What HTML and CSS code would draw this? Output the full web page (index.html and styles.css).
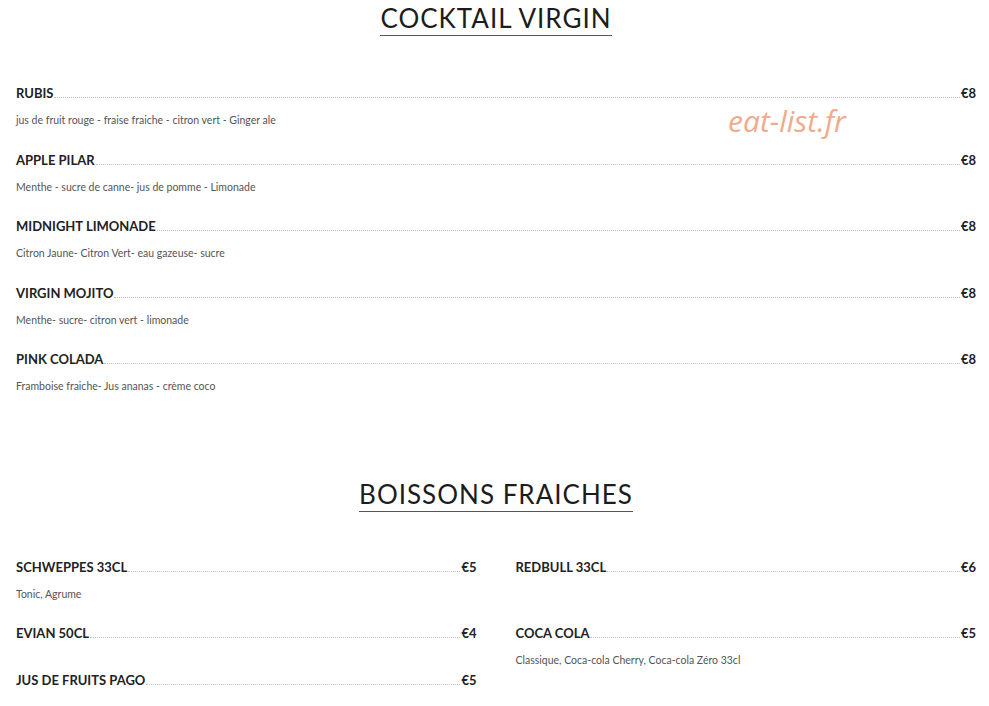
FILE: index.html
```html
<!DOCTYPE html>
<html lang="fr">
<head>
  <meta charset="UTF-8" />
  <meta name="viewport" content="width=device-width, initial-scale=1.0"/>
  <title>Carte - Boissons</title>
  <link rel="stylesheet" href="styles.css">
</head>
<body>

<div class="menu">

  <section class="section">
    <div class="section-head"><h2>COCKTAIL VIRGIN</h2></div>
    <div class="items">
      <div class="item">
        <div class="item-row"><span class="name">RUBIS</span><span class="dots"></span><span class="price">€8</span></div>
        <p class="desc">jus de fruit rouge - fraise fraiche - citron vert - Ginger ale</p>
      </div>
      <div class="item">
        <div class="item-row"><span class="name">APPLE PILAR</span><span class="dots"></span><span class="price">€8</span></div>
        <p class="desc">Menthe - sucre de canne- jus de pomme - Limonade</p>
      </div>
      <div class="item">
        <div class="item-row"><span class="name">MIDNIGHT LIMONADE</span><span class="dots"></span><span class="price">€8</span></div>
        <p class="desc">Citron Jaune- Citron Vert- eau gazeuse- sucre</p>
      </div>
      <div class="item">
        <div class="item-row"><span class="name">VIRGIN MOJITO</span><span class="dots"></span><span class="price">€8</span></div>
        <p class="desc">Menthe- sucre- citron vert - limonade</p>
      </div>
      <div class="item">
        <div class="item-row"><span class="name">PINK COLADA</span><span class="dots"></span><span class="price">€8</span></div>
        <p class="desc">Framboise fraiche- Jus ananas - crème coco</p>
      </div>
    </div>
  </section>

  <section class="section section-second">
    <div class="section-head"><h2>BOISSONS FRAICHES</h2></div>
    <div class="items items-two">
      <div class="col">
        <div class="item">
          <div class="item-row"><span class="name">SCHWEPPES 33CL</span><span class="dots"></span><span class="price">€5</span></div>
          <p class="desc">Tonic, Agrume</p>
        </div>
        <div class="item item-short">
          <div class="item-row"><span class="name">EVIAN 50CL</span><span class="dots"></span><span class="price">€4</span></div>
        </div>
        <div class="item">
          <div class="item-row"><span class="name">JUS DE FRUITS PAGO</span><span class="dots"></span><span class="price">€5</span></div>
        </div>
      </div>
      <div class="col">
        <div class="item">
          <div class="item-row"><span class="name">REDBULL 33CL</span><span class="dots"></span><span class="price">€6</span></div>
          <p class="desc">&nbsp;</p>
        </div>
        <div class="item">
          <div class="item-row"><span class="name">COCA COLA</span><span class="dots"></span><span class="price">€5</span></div>
          <p class="desc">Classique, Coca-cola Cherry, Coca-cola Zéro 33cl</p>
        </div>
      </div>
    </div>
  </section>

  <div class="watermark">eat-list.fr</div>
</div>

</body>
</html>
```

FILE: styles.css
```css
* {
  margin: 0;
  padding: 0;
  box-sizing: border-box;
}
body {
  font-family: 'Lato', 'Liberation Sans', sans-serif;
  background-color: #fff;
  color: #222;
  overflow: hidden;
}

.menu {
  position: relative;
  width: 960px;
  margin-left: 16px;
}

.section {
  padding-top: 3px;
}
.section-second {
  padding-top: 61px;
}
.section-head {
  text-align: center;
}
h2 {
  display: inline-block;
  font-size: 26px;
  font-weight: 400;
  letter-spacing: 1px;
  line-height: 31px;
  padding-bottom: 1px;
  border-bottom: 1px solid #555;
  color: #1c1c1c;
}

.items {
  margin-top: 49px;
}
.items-two {
  display: grid;
  grid-template-columns: 1fr 1fr;
  column-gap: 39px;
  margin-top: 47px;
}

.item {
  margin-bottom: 23.5px;
}
.item-short {
  margin-bottom: 31px;
}
.item-row {
  display: flex;
  align-items: flex-end;
  line-height: 16px;
  font-size: 13px;
}
.name {
  font-weight: 700;
  color: #222;
}
.dots {
  flex: 1;
  border-bottom: 1px dotted #c2c2c2;
  margin: 0 1px 3px;
}
.price {
  font-weight: 700;
  color: #222;
}
.desc {
  margin-top: 12px;
  font-size: 10.5px;
  line-height: 15px;
  color: #555;
}

.watermark {
  position: absolute;
  left: 712px;
  top: 100px;
  font-family: 'Open Sans', sans-serif;
  font-style: italic;
  font-size: 30px;
  color: #efab8a;
}
```
